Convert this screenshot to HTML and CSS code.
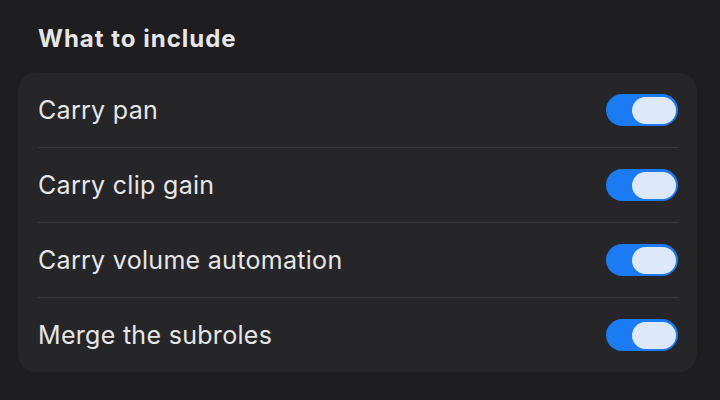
FILE: index.html
```html
<!DOCTYPE html>
<html lang="en">
<head>
  <meta charset="UTF-8" />
  <title>What to include</title>
  <link rel="stylesheet" href="styles.css">
</head>
<body>

  <div class="panel">
    <h2 class="section-title">What to include</h2>

    <!-- Options list -->
    <div class="card">
      <div class="row">
        <span class="label">Carry pan</span>
        <span class="toggle on"><span class="knob"></span></span>
      </div>
      <div class="row">
        <span class="label">Carry clip gain</span>
        <span class="toggle on"><span class="knob"></span></span>
      </div>
      <div class="row">
        <span class="label">Carry volume automation</span>
        <span class="toggle on"><span class="knob"></span></span>
      </div>
      <div class="row">
        <span class="label">Merge the subroles</span>
        <span class="toggle on"><span class="knob"></span></span>
      </div>
    </div>
  </div>

</body>
</html>
```

FILE: styles.css
```css
* {
  box-sizing: border-box;
  margin: 0;
  padding: 0;
}

html, body {
  width: 100%;
  height: 100%;
  background: #1e1e20;
  color: #e6e6e7;
  font-family: Inter, 'Noto Sans', sans-serif;
}

.panel {
  padding: 25px 23px 0 18px;
}

.section-title {
  font-size: 24px;
  line-height: 28px;
  font-weight: 700;
  letter-spacing: 1px;
  padding-left: 20px;
  margin-bottom: 20px;
}

.card {
  background: #262628;
  border-radius: 18px;
  padding: 0 19px 0 20px;
}

.row {
  display: flex;
  align-items: center;
  justify-content: space-between;
  height: 75px;
  border-bottom: 1px solid #373739;
}

.row:last-child {
  border-bottom: none;
  height: 74px;
}

.label {
  font-size: 25px;
  letter-spacing: 0.3px;
}

.toggle {
  width: 72px;
  height: 32px;
  border-radius: 16px;
  background: #3a3a3c;
  display: flex;
  align-items: center;
  padding: 0 2px;
}

.toggle.on {
  background: #1a7bf4;
  justify-content: flex-end;
}

.knob {
  width: 44px;
  height: 27px;
  border-radius: 14px;
  background: #dde8fb;
}
```
